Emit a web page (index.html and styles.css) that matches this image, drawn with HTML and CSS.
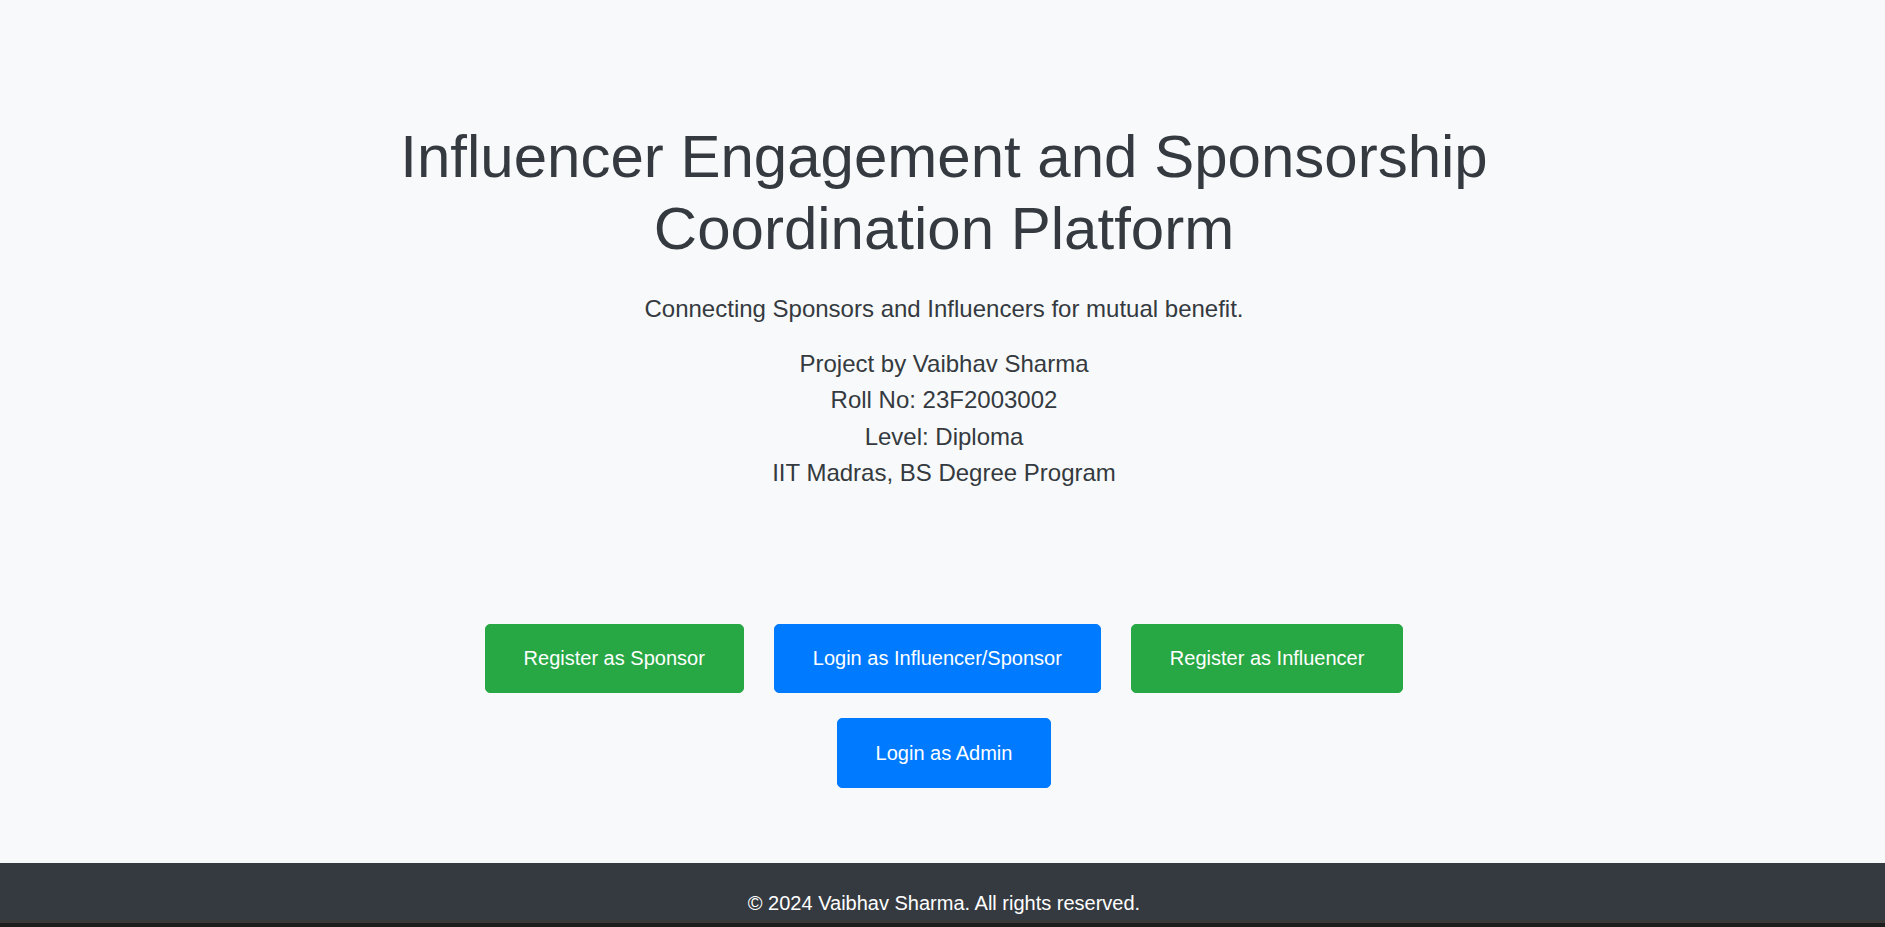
FILE: index.html
```html
<!DOCTYPE html>
<html lang="en">
<head>
<meta charset="utf-8">
<title>Influencer Engagement and Sponsorship Coordination Platform</title>
<link rel="stylesheet" href="styles.css">
</head>
<body>
<div class="page">
  <main class="hero">
    <h1 class="title">Influencer Engagement and Sponsorship<br>Coordination Platform</h1>
    <p class="lead">Connecting Sponsors and Influencers for mutual benefit.</p>
    <div class="info">
      <p>Project by Vaibhav Sharma</p>
      <p>Roll No: 23F2003002</p>
      <p>Level: Diploma</p>
      <p>IIT Madras, BS Degree Program</p>
    </div>
    <div class="actions">
      <div class="row">
        <a class="btn btn-green" href="#">Register as Sponsor</a>
        <a class="btn btn-blue" href="#">Login as Influencer/Sponsor</a>
        <a class="btn btn-green" href="#">Register as Influencer</a>
      </div>
      <div class="row">
        <a class="btn btn-blue btn-admin" href="#">Login as Admin</a>
      </div>
    </div>
  </main>
  <footer class="footer">
    <p>&copy; 2024 Vaibhav Sharma. All rights reserved.</p>
  </footer>
  <div class="edge"></div>
</div>
</body>
</html>
```
FILE: styles.css
```css
html, body {
  margin: 0;
  padding: 0;
}
body {
  background: #f8f9fa;
  font-family: "Liberation Sans", Arial, sans-serif;
  color: #343a40;
}
.page {
  height: 927px;
  display: flex;
  flex-direction: column;
}
.hero {
  flex: 1;
  padding: 121px 0 0 3px;
  text-align: center;
}
.title {
  margin: 0 0 26px;
  font-size: 60px;
  line-height: 72px;
  font-weight: 400;
  color: #343a40;
}
.lead {
  margin: 0 0 19px;
  font-size: 24px;
  line-height: 36px;
}
.info p {
  margin: 0;
  font-size: 24px;
  line-height: 36.4px;
}
.actions {
  margin-top: 132px;
  display: flex;
  flex-direction: column;
  align-items: center;
  gap: 25px;
}
.row {
  display: flex;
  justify-content: center;
  gap: 30px;
}
.btn {
  display: inline-block;
  padding: 18px 38px;
  font-size: 20px;
  line-height: 31px;
  border: 1px solid transparent;
  border-radius: 5px;
  color: #fff;
  text-decoration: none;
}
.btn-admin {
  line-height: 32px;
}
.btn-green {
  background: #28a745;
  border-color: #28a745;
}
.btn-blue {
  background: #007bff;
  border-color: #007bff;
}
.footer {
  height: 57px;
  box-sizing: border-box;
  padding-top: 25px;
  background: #343a40;
  color: #fff;
  text-align: center;
}
.footer p {
  margin: 0 0 0 3px;
  font-size: 20px;
  line-height: 30px;
}
.edge {
  height: 7px;
  box-sizing: border-box;
  background: #1e1e1e;
  border-top: 3px solid #3a3a3a;
}
```
